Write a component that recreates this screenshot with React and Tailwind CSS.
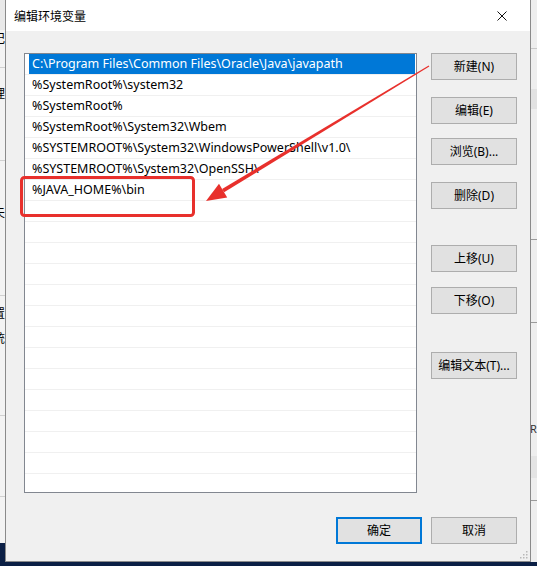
import React from "react";

const paths = [
  "C:\\Program Files\\Common Files\\Oracle\\Java\\javapath",
  "%SystemRoot%\\system32",
  "%SystemRoot%",
  "%SystemRoot%\\System32\\Wbem",
  "%SYSTEMROOT%\\System32\\WindowsPowerShell\\v1.0\\",
  "%SYSTEMROOT%\\System32\\OpenSSH\\",
  "%JAVA_HOME%\\bin",
];

const rows = Array.from({ length: 20 }, (_, i) => paths[i] || "");

function Button({ children, className = "", primary = false }) {
  return (
    <button
      className={
        "h-[27px] w-[86px] flex items-center justify-center bg-[#e1e1e1] text-[12px] text-black " +
        (primary ? "border-2 border-[#0078d7] " : "border border-[#adadad] ") +
        className
      }
    >
      {children}
    </button>
  );
}

function LeftStrip() {
  // bits of the window behind the dialog
  return (
    <div className="w-[5px] h-full bg-[#f3f3f3] overflow-hidden flex flex-col text-[12px] text-black leading-none">
      <div className="h-[30px] bg-[#e9e9e9]" />
      <div className="-ml-[7px] mt-[3px]">记</div>
      <div className="mt-[22px] h-px bg-[#d0d0d0]" />
      <div className="-ml-[7px] mt-[20px]">理</div>
      <div className="mt-[60px] h-px bg-[#d0d0d0]" />
      <div className="-ml-[7px] mt-[46px]">夫</div>
      <div className="mt-[76px] h-px bg-[#d0d0d0]" />
      <div className="-ml-[7px] mt-[12px]">置</div>
      <div className="-ml-[7px] mt-[13px]">统</div>
      <div className="mt-[70px] h-px bg-[#d0d0d0]" />
      <div className="mt-[80px] h-px bg-[#d0d0d0]" />
      <div className="flex-1" />
      <div className="h-[19px] bg-[#0b1f45]" />
    </div>
  );
}

function RightStrip() {
  return (
    <div className="w-[6px] h-full bg-[#eeeeee] overflow-hidden flex flex-col text-[11px] leading-none">
      <div className="h-[48px]" />
      <div className="h-px bg-[#c8c8c8]" />
      <div className="h-[40px]" />
      <div className="h-[20px] bg-[#e2e2e2]" />
      <div className="h-[130px]" />
      <div className="h-px bg-[#9a9a9a]" />
      <div className="h-[82px]" />
      <div className="h-px bg-[#9a9a9a]" />
      <div className="h-[100px]" />
      <div className="-ml-[1px] text-[#333]">R:</div>
      <div className="h-[22px]" />
      <div className="h-[22px] bg-[#e4e4e4]" />
      <div className="h-[22px]" />
      <div className="h-px bg-[#9a9a9a]" />
    </div>
  );
}

export default function App() {
  return (
    <div className="w-[537px] h-[566px] overflow-hidden bg-[#0b1f45] flex flex-col font-['Noto_Sans','Noto_Sans_CJK_SC',sans-serif]">
      <div className="h-[562px] flex">
        <LeftStrip />
        <div className="relative w-[526px] h-full flex flex-col border-x border-b border-[#8a8a8a] bg-[#f0f0f0]">
          {/* title bar */}
          <div className="h-[31px] bg-white flex items-center justify-between pl-[8px] pr-[23px]">
            <span className="text-[12px] text-black font-['Noto_Sans_CJK_SC',sans-serif]">编辑环境变量</span>
            <svg width="10" height="10" viewBox="0 0 10 10">
              <path d="M0.5 0.5 L9.5 9.5 M9.5 0.5 L0.5 9.5" stroke="#111" strokeWidth="1" />
            </svg>
          </div>

          <div className="flex-1 flex flex-col pt-[22px] pl-[18px] pr-[13px] pb-[17px]">
            <div className="flex gap-[14px]">
              {/* list */}
              <div className="w-[393px] h-[440px] border border-[#828790] bg-white flex flex-col">
                {rows.map((text, i) => (
                  <div key={i} className="h-[21px] shrink-0 border-b border-[#f0f0f0] flex">
                    {i === 0 ? (
                      <div className="ml-[4px] mr-px flex-1 bg-[#0078d7] text-white text-[12.5px] pl-[3px] pt-px flex items-center whitespace-nowrap overflow-hidden">
                        {text}
                      </div>
                    ) : (
                      <div className="pl-[7px] pt-px text-[12.5px] text-black flex items-center whitespace-nowrap">
                        {text}
                      </div>
                    )}
                  </div>
                ))}
              </div>

              {/* side buttons */}
              <div className="w-[86px] flex flex-col">
                <Button>新建(N)</Button>
                <Button className="mt-[17px]">编辑(E)</Button>
                <Button className="mt-[14px]">浏览(B)...</Button>
                <Button className="mt-[17px]">删除(D)</Button>
                <Button className="mt-[36px]">上移(U)</Button>
                <Button className="mt-[15px]">下移(O)</Button>
                <Button className="mt-[38px]">编辑文本(T)...</Button>
              </div>
            </div>

            <div className="mt-[24px] flex justify-end gap-[9px]">
              <Button primary>确定</Button>
              <Button>取消</Button>
            </div>
          </div>

          {/* resize grip */}
          <svg className="absolute right-[2px] bottom-[2px]" width="9" height="9" viewBox="0 0 9 9">
            <rect x="7" y="1" width="1.5" height="1.5" fill="#b8b8b8" />
            <rect x="4" y="4" width="1.5" height="1.5" fill="#b8b8b8" />
            <rect x="7" y="4" width="1.5" height="1.5" fill="#b8b8b8" />
            <rect x="1" y="7" width="1.5" height="1.5" fill="#b8b8b8" />
            <rect x="4" y="7" width="1.5" height="1.5" fill="#b8b8b8" />
            <rect x="7" y="7" width="1.5" height="1.5" fill="#b8b8b8" />
          </svg>

          {/* red annotation, page coords shifted by dialog left (5px) */}
          <svg className="absolute left-0 top-0 pointer-events-none" width="526" height="562" viewBox="5 0 526 562">
            <rect x="20.5" y="177.5" width="172" height="38" rx="3" fill="none" stroke="#e8302c" strokeWidth="3" />
            <polygon
              points="223.1,192.3 428.3,66.4 427.7,65.6 221.1,188.9"
              fill="#e8302c"
            />
            <polygon points="205,201 218,183.8 226.2,197.4" fill="#e8302c" />
          </svg>
        </div>
        <RightStrip />
      </div>
    </div>
  );
}
